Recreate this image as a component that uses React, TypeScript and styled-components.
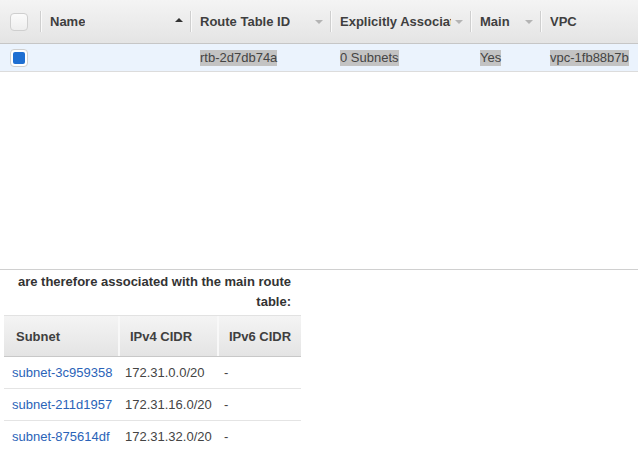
import styled, { createGlobalStyle } from "styled-components";

const GlobalStyle = createGlobalStyle`
  html, body {
    margin: 0;
    padding: 0;
    background: #ffffff;
  }
  body {
    font-family: "Liberation Sans", Arial, sans-serif;
    font-size: 13px;
    color: #444444;
  }
`;

const HEADER_GRADIENT = "linear-gradient(to bottom, #f4f4f4 0%, #e4e4e4 100%)";

interface Column {
  key: string;
  label: string;
  width: number;
  sort?: "asc" | "none";
}

const columns: Column[] = [
  { key: "name", label: "Name", width: 150, sort: "asc" },
  { key: "id", label: "Route Table ID", width: 140, sort: "none" },
  { key: "explicit", label: "Explicitly Associated With", width: 140, sort: "none" },
  { key: "main", label: "Main", width: 70, sort: "none" },
  { key: "vpc", label: "VPC", width: 98 },
];

const row: Record<string, string> = {
  name: "",
  id: "rtb-2d7db74a",
  explicit: "0 Subnets",
  main: "Yes",
  vpc: "vpc-1fb88b7b",
};

const subnets = [
  { id: "subnet-3c959358", v4: "172.31.0.0/20", v6: "-" },
  { id: "subnet-211d1957", v4: "172.31.16.0/20", v6: "-" },
  { id: "subnet-875614df", v4: "172.31.32.0/20", v6: "-" },
];

const Page = styled.div`
  width: 638px;
  height: 450px;
  overflow: hidden;
  display: flex;
  flex-direction: column;
`;

const Grid = styled.div`
  flex: 0 0 auto;
  height: 269px;
  border-bottom: 1px solid #d0d0d0;
  display: flex;
  flex-direction: column;
`;

const HeaderRow = styled.div`
  display: flex;
  height: 43px;
  background: ${HEADER_GRADIENT};
  border-bottom: 1px solid #c6c6c6;
`;

const HeaderCell = styled.div<{ $width: number }>`
  position: relative;
  flex: 0 0 ${(p) => p.$width}px;
  width: ${(p) => p.$width}px;
  min-width: 0;
  overflow: hidden;
  display: flex;
  align-items: center;
  padding: 0 19px 0 10px;
  box-sizing: border-box;
  font-weight: bold;
  font-size: 13px;
  color: #3f3f3f;
  &::before {
    content: "";
    position: absolute;
    left: 0;
    top: 11px;
    bottom: 11px;
    width: 1px;
    background: #cfcfcf;
    box-shadow: 1px 0 0 #fafafa;
  }
`;

const HeaderLabel = styled.span`
  white-space: nowrap;
  overflow: hidden;
  min-width: 0;
`;

const SortArrow = styled.span<{ $active?: boolean }>`
  position: absolute;
  right: 7px;
  width: 0;
  height: 0;
  border-left: 4px solid transparent;
  border-right: 4px solid transparent;
  ${(p) =>
    p.$active
      ? "border-bottom: 4px solid #333333; top: 18px;"
      : "border-top: 4px solid #b4b4b4; top: 20px;"}
`;

const CheckCell = styled.div`
  flex: 0 0 40px;
  display: flex;
  align-items: center;
  padding-left: 10px;
  box-sizing: border-box;
`;

const CheckBox = styled.div<{ $checked?: boolean }>`
  width: 18px;
  height: 18px;
  box-sizing: border-box;
  border: 1px solid #cfcfcf;
  border-radius: 4px;
  background: ${(p) => (p.$checked ? "#ffffff" : "linear-gradient(#fbfbfb, #eeeeee)")};
  display: flex;
  align-items: center;
  justify-content: center;
  &::after {
    content: "";
    display: ${(p) => (p.$checked ? "block" : "none")};
    width: 12px;
    height: 12px;
    border-radius: 2px;
    background: #1f6fd2;
  }
`;

const DataRow = styled.div`
  display: flex;
  height: 27px;
  background: #ebf3fd;
  border-bottom: 1px solid #dcdcdc;
`;

const DataCell = styled.div<{ $width: number }>`
  flex: 0 0 ${(p) => p.$width}px;
  min-width: 0;
  display: flex;
  align-items: center;
  padding-left: 10px;
  box-sizing: border-box;
  white-space: nowrap;
  overflow: hidden;
  font-size: 13px;
  color: #444444;
`;

const Selected = styled.span`
  background: #c3c3c3;
  line-height: 16px;
`;

const Lower = styled.div`
  flex: 0 0 auto;
  display: flex;
  flex-direction: column;
  padding: 0 0 0 4px;
`;

const Note = styled.div`
  width: 287px;
  text-align: right;
  font-weight: bold;
  font-size: 13px;
  line-height: 20px;
  color: #333333;
  padding-top: 2px;
  margin-bottom: 3px;
`;

const SubTable = styled.div`
  width: 297px;
  display: flex;
  flex-direction: column;
`;

const SubHeader = styled.div`
  display: flex;
  height: 40px;
  background: ${HEADER_GRADIENT};
  border-top: 1px solid #e2e2e2;
  border-bottom: 1px solid #c8c8c8;
`;

const SubHeadCell = styled.div<{ $width: number }>`
  flex: 0 0 ${(p) => p.$width}px;
  display: flex;
  align-items: center;
  padding-left: 12px;
  box-sizing: border-box;
  font-weight: bold;
  font-size: 13px;
  color: #3f3f3f;
  & + & {
    border-left: 2px solid #f8f8f8;
    padding-left: 10px;
  }
`;

const SubRow = styled.div`
  display: flex;
  height: 31px;
  border-bottom: 1px solid #e4e4e4;
`;

const SubCell = styled.div<{ $width: number }>`
  flex: 0 0 ${(p) => p.$width}px;
  display: flex;
  align-items: center;
  padding-left: 8px;
  box-sizing: border-box;
  font-size: 13px;
  color: #444444;
  white-space: nowrap;
  & + & {
    padding-left: 7px;
  }
`;

const Link = styled.a`
  color: #2a63b8;
  text-decoration: none;
`;

const subWidths = [114, 99, 84];

export default function App() {
  return (
    <>
      <GlobalStyle />
      <Page>
        <Grid>
          <HeaderRow>
            <CheckCell>
              <CheckBox />
            </CheckCell>
            {columns.map((c) => (
              <HeaderCell key={c.key} $width={c.width}>
                <HeaderLabel>{c.label}</HeaderLabel>
                {c.sort && <SortArrow $active={c.sort === "asc"} />}
              </HeaderCell>
            ))}
          </HeaderRow>
          <DataRow>
            <CheckCell>
              <CheckBox $checked />
            </CheckCell>
            {columns.map((c) => (
              <DataCell key={c.key} $width={c.width}>
                {row[c.key] && <Selected>{row[c.key]}</Selected>}
              </DataCell>
            ))}
          </DataRow>
        </Grid>
        <Lower>
          <Note>are therefore associated with the main route table:</Note>
          <SubTable>
            <SubHeader>
              <SubHeadCell $width={subWidths[0]}>Subnet</SubHeadCell>
              <SubHeadCell $width={subWidths[1]}>IPv4 CIDR</SubHeadCell>
              <SubHeadCell $width={subWidths[2]}>IPv6 CIDR</SubHeadCell>
            </SubHeader>
            {subnets.map((s) => (
              <SubRow key={s.id}>
                <SubCell $width={subWidths[0]}>
                  <Link href="#">{s.id}</Link>
                </SubCell>
                <SubCell $width={subWidths[1]}>{s.v4}</SubCell>
                <SubCell $width={subWidths[2]}>{s.v6}</SubCell>
              </SubRow>
            ))}
          </SubTable>
        </Lower>
      </Page>
    </>
  );
}
